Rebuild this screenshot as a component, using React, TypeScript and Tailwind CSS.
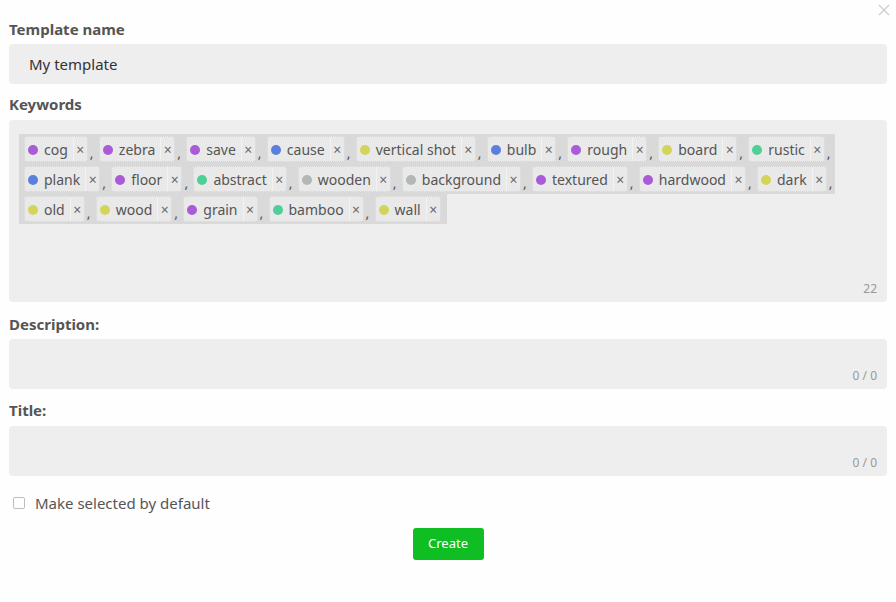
import React from "react";

type Tag = { t: string; c: string };
const P = "#a95bd8";
const B = "#5b7fdc";
const Y = "#d3d45a";
const G = "#4fcf98";
const R = "#b4b8b4";

const rows: Tag[][] = [
  [
    { t: "cog", c: P },
    { t: "zebra", c: P },
    { t: "save", c: P },
    { t: "cause", c: B },
    { t: "vertical shot", c: Y },
    { t: "bulb", c: B },
    { t: "rough", c: P },
    { t: "board", c: Y },
    { t: "rustic", c: G },
  ],
  [
    { t: "plank", c: B },
    { t: "floor", c: P },
    { t: "abstract", c: G },
    { t: "wooden", c: R },
    { t: "background", c: R },
    { t: "textured", c: P },
    { t: "hardwood", c: P },
    { t: "dark", c: Y },
  ],
  [
    { t: "old", c: Y },
    { t: "wood", c: Y },
    { t: "grain", c: P },
    { t: "bamboo", c: G },
    { t: "wall", c: Y },
  ],
];

function TagChip({ tag, last }: { tag: Tag; last: boolean }) {
  return (
    <div className="flex items-center">
      <div className="ml-[5px] flex h-[26px] items-stretch rounded-[3px] border border-dotted border-[#d2d2d2] bg-[#e9e9e9]">
        <div className="flex items-center gap-[6px] pl-[3px] pr-[5px] pt-[1px]">
          <span className="block h-[10px] w-[10px] rounded-full" style={{ backgroundColor: tag.c }} />
          <span className="pt-[1px] text-[14px] leading-none text-[#555]">{tag.t}</span>
        </div>
        <div className="flex w-[14px] items-center justify-center border-l border-[#f3f3f3] pt-[1px] text-[14px] leading-none text-[#6a6a6a]">
          ×
        </div>
      </div>
      {!last && <span className="w-[6px] pl-[2px] pt-[7px] text-[14px] leading-none text-[#555]">,</span>}
    </div>
  );
}

function Row({ tags, isLastRow }: { tags: Tag[]; isLastRow: boolean }) {
  return (
    <div className="flex h-[30px] items-center">
      {tags.map((tag, i) => (
        <TagChip key={tag.t} tag={tag} last={isLastRow && i === tags.length - 1} />
      ))}
    </div>
  );
}

function Label({ children, className = "" }: { children: React.ReactNode; className?: string }) {
  return (
    <div className={"text-[15px] font-bold leading-[20px] text-[#555] " + className}>{children}</div>
  );
}

export default function App() {
  return (
    <div
      className="relative min-h-[602px] bg-[#fefefe] px-[9px] pt-[19px]"
      style={{ fontFamily: '"Noto Sans", "Open Sans", sans-serif' }}
    >
      <svg className="absolute right-[6px] top-[4px]" width="12" height="12" viewBox="0 0 12 12">
        <path d="M1 1 L11 11 M11 1 L1 11" stroke="#cfcfcf" strokeWidth="1.4" />
      </svg>

      <Label>Template name</Label>
      <div className="mt-[5px] flex h-[40px] items-center rounded-[4px] bg-[#eeeeee] pl-[20px] text-[15px] text-[#333]">
        My template
      </div>

      <Label className="mt-[10px]">Keywords</Label>
      <div className="relative mt-[6px] h-[182px] rounded-[4px] bg-[#eeeeee] pl-[10px] pt-[14px]">
        <div className="inline-flex flex-col items-start">
          <div className="bg-[#d9d9d9] pr-[2px]">
            <Row tags={rows[0]} isLastRow={false} />
            <Row tags={rows[1]} isLastRow={false} />
          </div>
          <div className="bg-[#d9d9d9] pr-[6px]">
            <Row tags={rows[2]} isLastRow={true} />
          </div>
        </div>
        <div className="absolute bottom-[7px] right-[10px] text-[12px] leading-none text-[#999]">22</div>
      </div>

      <Label className="mt-[12px]">Description:</Label>
      <div className="relative mt-[5px] h-[50px] rounded-[4px] bg-[#eeeeee]">
        <div className="absolute bottom-[7px] right-[10px] text-[12px] leading-none text-[#999]">0 / 0</div>
      </div>

      <Label className="mt-[11px]">Title:</Label>
      <div className="relative mt-[6px] h-[50px] rounded-[4px] bg-[#eeeeee]">
        <div className="absolute bottom-[7px] right-[10px] text-[12px] leading-none text-[#999]">0 / 0</div>
      </div>

      <div className="mt-[17px] flex items-center pl-[4px]">
        <span className="block h-[12px] w-[12px] rounded-[2px] border border-[#bdbdbd] bg-white" />
        <span className="ml-[10px] text-[15px] leading-[20px] text-[#555]">Make selected by default</span>
      </div>

      <div className="mt-[15px] flex justify-center">
        <button className="h-[32px] w-[71px] rounded-[3px] bg-[#0fbe22] text-[13px] text-white">Create</button>
      </div>
    </div>
  );
}
